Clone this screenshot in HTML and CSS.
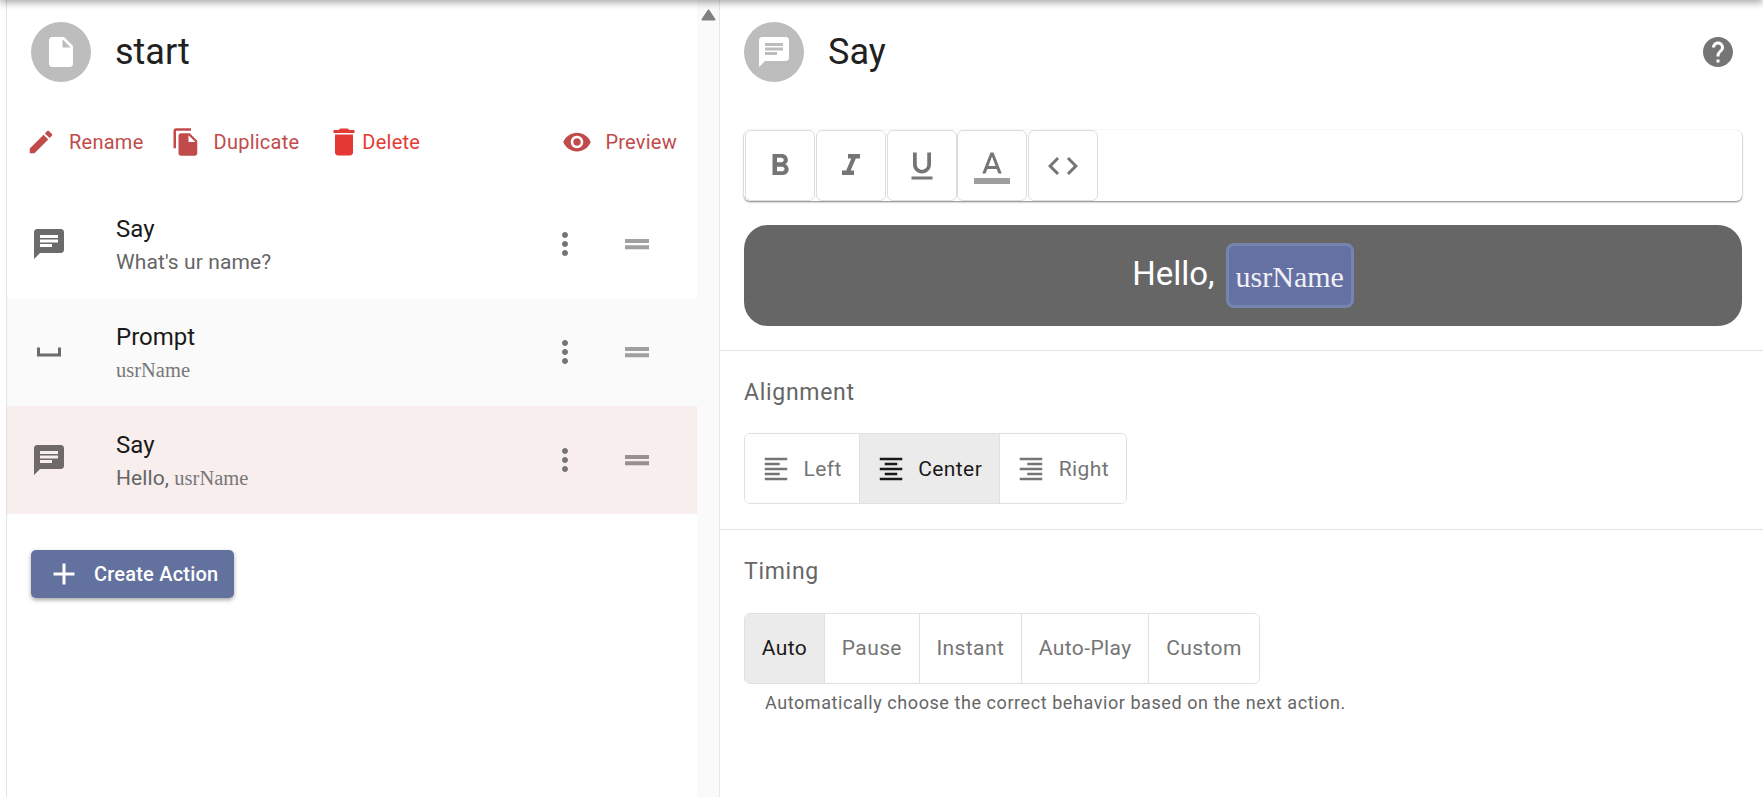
FILE: index.html
```html
<!DOCTYPE html>
<html lang="en">
<head>
<meta charset="utf-8">
<title>Say</title>
<link rel="stylesheet" href="styles.css">
</head>
<body>
<div class="top-shadow"></div>
<main class="page">
  <section class="left">
    <div class="left-content">
      <header class="head">
        <div class="avatar"><svg class="i36" viewBox="0 0 24 24"><path fill="#fff" d="M6 2c-1.1 0-1.99.9-1.99 2L4 20c0 1.1.89 2 1.99 2H18c1.1 0 2-.9 2-2V8l-6-6H6zm7 7V3.5L18.5 9H13z"/></svg></div>
        <h1 class="title">start</h1>
      </header>
      <div class="actions">
        <a class="act act-dim"><svg class="i30" viewBox="0 0 24 24"><path d="M3 17.25V21h3.75L17.81 9.94l-3.75-3.75L3 17.25zM20.71 7.04c.39-.39.39-1.02 0-1.41l-2.34-2.34c-.39-.39-1.02-.39-1.41 0l-1.83 1.83 3.75 3.75 1.83-1.83z"/></svg><span class="act-text">Rename</span></a>
        <a class="act act-dim act-next"><svg class="i30" viewBox="0 0 24 24"><path d="M16 1H4c-1.1 0-2 .9-2 2v14h2V3h12V1zm-1 4l6 6v10c0 1.1-.9 2-2 2H7.99C6.89 23 6 22.1 6 21l.01-14c0-1.1.89-2 1.99-2h7zm-1 7h5.5L14 6.5V12z"/></svg><span class="act-text">Duplicate</span></a>
        <a class="act act-red act-next act-tight"><svg class="i36" viewBox="0 0 24 24"><path d="M6 19c0 1.1.9 2 2 2h8c1.1 0 2-.9 2-2V7H6v12zM19 4h-3.5l-1-1h-5l-1 1H5v2h14V4z"/></svg><span class="act-text">Delete</span></a>
        <a class="act act-dim act-end"><svg class="i30" viewBox="0 0 24 24"><path d="M12 4.5C7 4.5 2.73 7.61 1 12c1.73 4.39 6 7.5 11 7.5s9.27-3.11 11-7.5c-1.73-4.39-6-7.5-11-7.5zM12 17c-2.76 0-5-2.24-5-5s2.24-5 5-5 5 2.24 5 5-2.24 5-5 5zm0-8c-1.66 0-3 1.34-3 3s1.34 3 3 3 3-1.34 3-3-1.34-3-3-3z"/></svg><span class="act-text">Preview</span></a>
      </div>
      <ul class="rows">
        <li class="row">
          <svg class="i36 row-icon" viewBox="0 0 24 24"><path d="M20 2H4c-1.1 0-1.99.9-1.99 2L2 22l4-4h14c1.1 0 2-.9 2-2V4c0-1.1-.9-2-2-2zM6 9h12v2H6V9zm8 5H6v-2h8v2zm4-6H6V6h12v2z"/></svg>
          <div class="row-body"><div class="row-title">Say</div><div class="row-sub">What's ur name?</div></div>
          <svg class="i36 row-more" viewBox="0 0 24 24"><path d="M12 8c1.1 0 2-.9 2-2s-.9-2-2-2-2 .9-2 2 .9 2 2 2zm0 2c-1.1 0-2 .9-2 2s.9 2 2 2 2-.9 2-2-.9-2-2-2zm0 6c-1.1 0-2 .9-2 2s.9 2 2 2 2-.9 2-2-.9-2-2-2z"/></svg>
          <svg class="i36 row-drag" viewBox="0 0 24 24"><path d="M20 8.7H4v2.6h16zm0 4.2H4v2.6h16z"/></svg>
        </li>
        <li class="row row-alt">
          <svg class="i36 row-icon" viewBox="0 0 24 24"><path d="M18 9v4H6V9H4v6h16V9z"/></svg>
          <div class="row-body"><div class="row-title">Prompt</div><div class="row-sub"><span class="var">usrName</span></div></div>
          <svg class="i36 row-more" viewBox="0 0 24 24"><path d="M12 8c1.1 0 2-.9 2-2s-.9-2-2-2-2 .9-2 2 .9 2 2 2zm0 2c-1.1 0-2 .9-2 2s.9 2 2 2 2-.9 2-2-.9-2-2-2zm0 6c-1.1 0-2 .9-2 2s.9 2 2 2 2-.9 2-2-.9-2-2-2z"/></svg>
          <svg class="i36 row-drag" viewBox="0 0 24 24"><path d="M20 8.7H4v2.6h16zm0 4.2H4v2.6h16z"/></svg>
        </li>
        <li class="row row-active">
          <svg class="i36 row-icon" viewBox="0 0 24 24"><path d="M20 2H4c-1.1 0-1.99.9-1.99 2L2 22l4-4h14c1.1 0 2-.9 2-2V4c0-1.1-.9-2-2-2zM6 9h12v2H6V9zm8 5H6v-2h8v2zm4-6H6V6h12v2z"/></svg>
          <div class="row-body"><div class="row-title">Say</div><div class="row-sub">Hello, <span class="var">usrName</span></div></div>
          <svg class="i36 row-more" viewBox="0 0 24 24"><path d="M12 8c1.1 0 2-.9 2-2s-.9-2-2-2-2 .9-2 2 .9 2 2 2zm0 2c-1.1 0-2 .9-2 2s.9 2 2 2 2-.9 2-2-.9-2-2-2zm0 6c-1.1 0-2 .9-2 2s.9 2 2 2 2-.9 2-2-.9-2-2-2z"/></svg>
          <svg class="i36 row-drag" viewBox="0 0 24 24"><path d="M20 8.7H4v2.6h16zm0 4.2H4v2.6h16z"/></svg>
        </li>
      </ul>
      <button class="create"><svg class="i36" viewBox="0 0 24 24"><path d="M19 13h-6v6h-2v-6H5v-2h6V5h2v6h6v2z"/></svg><span>Create Action</span></button>
    </div>
    <div class="scrollbar"><svg class="scroll-up" viewBox="0 0 15 12"><path d="M7.5 1.5L13.5 10.5H1.5z"/></svg></div>
  </section>

  <section class="right">
    <header class="head head-right">
      <div class="avatar"><svg class="i36" viewBox="0 0 24 24"><path fill="#fff" d="M20 2H4c-1.1 0-1.99.9-1.99 2L2 22l4-4h14c1.1 0 2-.9 2-2V4c0-1.1-.9-2-2-2zM6 9h12v2H6V9zm8 5H6v-2h8v2zm4-6H6V6h12v2z"/></svg></div>
      <h1 class="title">Say</h1>
      <svg class="i36 help" viewBox="0 0 24 24"><path d="M12 2C6.48 2 2 6.48 2 12s4.48 10 10 10 10-4.48 10-10S17.52 2 12 2zm1 17h-2v-2h2v2zm2.07-7.75l-.9.92C13.45 12.9 13 13.5 13 15h-2v-.5c0-1.1.45-2.1 1.17-2.83l1.24-1.26c.37-.36.59-.86.59-1.41 0-1.1-.9-2-2-2s-2 .9-2 2H8c0-2.21 1.79-4 4-4s4 1.79 4 4c0 .88-.36 1.68-.93 2.25z"/></svg>
    </header>
    <div class="editor">
      <div class="toolbar">
        <button class="tool"><svg class="i36" viewBox="0 0 24 24"><path d="M15.6 10.79c.97-.67 1.65-1.77 1.65-2.79 0-2.26-1.75-4-4-4H7v14h7.04c2.09 0 3.71-1.7 3.71-3.79 0-1.52-.86-2.82-2.15-3.42zM10 6.5h3c.83 0 1.5.67 1.5 1.5s-.67 1.5-1.5 1.5h-3v-3zm3.5 9H10v-3h3.5c.83 0 1.5.67 1.5 1.5s-.67 1.5-1.5 1.5z"/></svg></button>
        <button class="tool"><svg class="i36" viewBox="0 0 24 24"><path d="M10 4v3h2.21l-3.42 8H6v3h8v-3h-2.21l3.42-8H18V4z"/></svg></button>
        <button class="tool"><svg class="i36" viewBox="0 0 24 24"><path d="M12 17c3.31 0 6-2.69 6-6V3h-2.5v8c0 1.93-1.57 3.5-3.5 3.5S8.5 12.93 8.5 11V3H6v8c0 3.31 2.69 6 6 6zm-7 2v2h14v-2H5z"/></svg></button>
        <button class="tool"><svg class="i36" viewBox="0 0 24 24"><path fill="#9e9e9e" d="M0 20h24v4H0z"/><path d="M11 3L5.5 17h2.25l1.12-3h6.25l1.12 3h2.25L13 3h-2zm-1.38 9L12 5.67 14.38 12H9.62z"/></svg></button>
        <button class="tool"><svg class="i36" viewBox="0 0 24 24"><path d="M9.4 16.6L4.8 12l4.6-4.6L8 6l-6 6 6 6 1.4-1.4zm5.2 0l4.6-4.6-4.6-4.6L16 6l6 6-6 6-1.4-1.4z"/></svg></button>
      </div>
      <div class="bubble"><span class="bubble-text">Hello,</span><span class="chip">usrName</span></div>
    </div>
    <div class="section">
      <h2 class="label">Alignment</h2>
      <div class="toggle">
        <button class="opt opt-icon"><svg class="i30" viewBox="0 0 24 24"><path d="M15 15H3v2h12v-2zm0-8H3v2h12V7zM3 13h18v-2H3v2zm0 8h18v-2H3v2zM3 3v2h18V3H3z"/></svg><span>Left</span></button>
        <button class="opt opt-icon opt-on"><svg class="i30" viewBox="0 0 24 24"><path d="M7 15v2h10v-2H7zm-4 6h18v-2H3v2zm0-8h18v-2H3v2zm4-6v2h10V7H7zM3 3v2h18V3H3z"/></svg><span>Center</span></button>
        <button class="opt opt-icon"><svg class="i30" viewBox="0 0 24 24"><path d="M3 21h18v-2H3v2zm6-4h12v-2H9v2zm-6-4h18v-2H3v2zm6-4h12V7H9v2zM3 3v2h18V3H3z"/></svg><span>Right</span></button>
      </div>
    </div>
    <div class="section">
      <h2 class="label label-timing">Timing</h2>
      <div class="toggle toggle-timing">
        <button class="opt opt-on">Auto</button>
        <button class="opt">Pause</button>
        <button class="opt">Instant</button>
        <button class="opt">Auto-Play</button>
        <button class="opt">Custom</button>
      </div>
      <p class="desc">Automatically choose the correct behavior based on the next action.</p>
    </div>
  </section>
</main>
</body>
</html>
```
FILE: styles.css
```css
* { box-sizing: border-box; }
html, body { margin: 0; height: 100%; overflow: hidden; background: #fff; }
body { font-family: Roboto, "Liberation Sans", sans-serif; color: #1a1a1a; }
svg { display: block; fill: currentColor; flex: none; }
.i36 { width: 36px; height: 36px; }
.i30 { width: 30px; height: 30px; }
.top-shadow {
  position: absolute; top: -6px; left: 0; right: 0; height: 6px;
  box-shadow: 0 1px 9px rgba(0,0,0,.55);
}
.page { display: flex; height: 797px; }
.left {
  width: 720px; flex: none; display: flex; padding-left: 6px;
  border-right: 1px solid #e6e6e6;
}
.left-content { width: 691px; flex: none; border-left: 1px solid #e3e3e3; }
.scrollbar { flex: 1; background: #fafafa; padding: 9px 0 0 4px; }
.scroll-up { width: 15px; height: 12px; fill: #808080; stroke: #808080; stroke-width: 2; stroke-linejoin: round; }
.head { display: flex; align-items: center; padding: 22px 0 0 24px; }
.avatar {
  width: 60px; height: 60px; border-radius: 50%; background: #bdbdbd;
  display: flex; align-items: center; justify-content: center; flex: none;
}
.title { margin: 0 0 0 24px; font-size: 36px; font-weight: 400; line-height: 60px; color: #212121; }
.actions { display: flex; align-items: center; height: 36px; margin-top: 42px; padding: 0 20px 0 19px; }
.act { display: flex; align-items: center; gap: 13px; font-size: 20px; letter-spacing: .25px; }
.act-dim { color: #c14b4b; }
.act-red { color: #e53935; }
.act-next { margin-left: 27px; }
.act-tight { gap: 0; }
.act-end { margin-left: auto; }
.rows { list-style: none; margin: 30px 0 0; padding: 0; }
.row { display: flex; align-items: center; height: 108px; padding-left: 24px; color: #6b6b6b; }
.row-alt { background: #fafafa; }
.row-active { background: #f7eeed; color: #6f6a69; }
.row-body { flex: 1; margin-left: 49px; margin-top: 3px; }
.row-title { font-size: 24px; line-height: 34px; color: #1a1a1a; }
.row-sub { font-size: 21px; line-height: 33px; color: #666; letter-spacing: .1px; }
.var { font-family: "Liberation Serif", serif; font-size: 20.5px; color: #777; letter-spacing: 0; }
.row-more { color: #757575; margin-right: 36px; }
.row-drag { color: #a0a0a0; margin-right: 42px; }
.row-active .row-drag { color: #998f8f; }
.create {
  display: flex; align-items: center; gap: 12px; width: 203px; height: 48px;
  margin: 36px 0 0 24px; padding: 0 0 0 15px; border: 0; border-radius: 5px;
  background: #62719d; color: #fff; font-family: inherit; font-size: 20px; font-weight: 500; letter-spacing: .2px;
  box-shadow: 0 2px 4px rgba(0,0,0,.35);
}
.right { flex: 1; display: flex; flex-direction: column; min-width: 0; }
.head-right { padding-right: 27px; }
.help { margin-left: auto; color: #757575; }
.editor { padding: 48px 21px 24px 24px; border-bottom: 1px solid #e3e3e3; }
.toolbar {
  display: flex; gap: .8px; height: 71px; border-radius: 6px; padding: 0 1px; background: #fff;
  box-shadow: 0 1px 2px rgba(0,0,0,.5), 0 0 1px rgba(0,0,0,.05);
}
.tool {
  width: 70px; height: 71px; display: flex; align-items: center; justify-content: center;
  background: #fff; border: 1px solid #ddd; border-radius: 6px; color: #757575; padding: 0;
}
.bubble {
  display: flex; align-items: center; justify-content: center; gap: 11px; height: 101px;
  margin-top: 24px; background: #666; border-radius: 24px; color: #fff; font-size: 33px;
}
.bubble-text { margin-top: -5px; }
.chip {
  display: flex; align-items: center; height: 65px; padding: 3px 7px 0; border: 3px solid #7585b0; border-radius: 8px;
  background: #6570a3; color: #f0f0f6; font-family: "Liberation Serif", serif; font-size: 30px;
}
.section { padding: 0 21px 25px 24px; border-bottom: 1px solid #e3e3e3; }
.section:last-child { border-bottom: 0; }
.label { margin: 0; padding-top: 26px; font-size: 23px; line-height: 32px; font-weight: 400; color: #666; letter-spacing: .7px; height: 82px; }
.label-timing { height: 83px; }
.toggle { display: inline-flex; height: 71px; border: 1px solid #e0e0e0; border-radius: 6px; overflow: hidden; vertical-align: top; }
.opt {
  display: flex; align-items: center; height: 100%; padding: 0 17px; border: 0; border-left: 1px solid #e0e0e0;
  background: #fff; color: #757575; font-family: inherit; font-size: 21px; letter-spacing: .4px;
}
.opt:first-child { border-left: 0; }
.opt-icon { gap: 12.5px; padding: 0 17px 0 16px; }
.opt-on { background: #ebebeb; color: #1a1a1a; }
.toggle-timing .opt { padding: 0 16.8px 2px; }
.desc { margin: 7px 0 0 21px; font-size: 18px; line-height: 24px; color: #666; letter-spacing: .57px; }
```
